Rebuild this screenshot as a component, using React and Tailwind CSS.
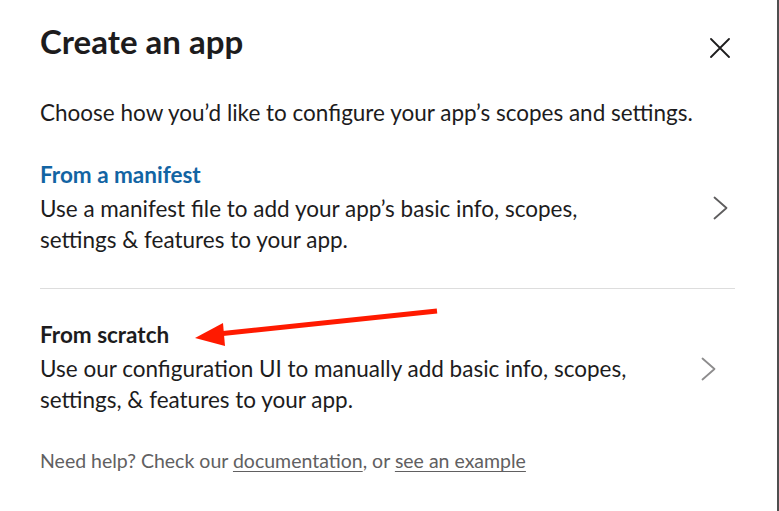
import React from "react";

const font = { fontFamily: "Lato, 'Noto Sans', sans-serif" };

function Chevron({ className }) {
  return (
    <svg width="15" height="24" viewBox="0 0 15 24" className={className} fill="none">
      <path d="M1.5 1.5 L13.5 12 L1.5 22.5" stroke="currentColor" strokeWidth="1.8" strokeLinecap="round" strokeLinejoin="round" />
    </svg>
  );
}

export default function App() {
  return (
    <div className="flex w-[779px] h-[511px] overflow-hidden bg-white" style={font}>
      <div className="relative flex-1 bg-white pl-[40px] pr-[42px] text-[#1d1c1d]">
        <div className="flex items-start justify-between pt-[21px]">
          <h1 className="text-[33px] leading-[40px] font-bold">Create an app</h1>
          <button className="mt-[17px] mr-[5px] text-[#1d1c1d]" aria-label="Close">
            <svg width="20" height="20" viewBox="0 0 20 20" fill="none">
              <path d="M1 1 L19 19 M19 1 L1 19" stroke="currentColor" strokeWidth="1.8" strokeLinecap="round" />
            </svg>
          </button>
        </div>
        <p className="mt-[36px] text-[22.5px] leading-[31px]">
          Choose how you’d like to configure your app’s scopes and settings.
        </p>

        <div className="mt-[31px] flex items-start justify-between">
          <div>
            <div className="text-[22.5px] leading-[31px] font-bold text-[#1264a3]">From a manifest</div>
            <div className="mt-[3px] text-[22.5px] leading-[31px] w-[610px]">
              Use a manifest file to add your app’s basic info, scopes, settings &amp; features to your app.
            </div>
          </div>
          <Chevron className="text-[#5e5d5e] mr-[7px] mt-[37px] shrink-0" />
        </div>

        <div className="mt-[33px] h-px bg-[#dddddd]" />

        <div className="mt-[30px] flex items-start justify-between">
          <div>
            <div className="text-[22.5px] leading-[31px] font-bold">From scratch</div>
            <div className="mt-[3px] text-[22.5px] leading-[31px] w-[610px]">
              Use our configuration UI to manually add basic info, scopes, settings, &amp; features to your app.
            </div>
          </div>
          <Chevron className="text-[#8d8c8d] mr-[19px] mt-[38px] shrink-0" />
        </div>

        <p className="mt-[34px] text-[19.5px] leading-[24px] text-[#616061]">
          Need help? Check our <span className="underline underline-offset-[3px]">documentation</span>, or{" "}
          <span className="underline underline-offset-[3px]">see an example</span>
        </p>

        <svg className="absolute left-0 top-0 pointer-events-none" width="777" height="511" viewBox="0 0 777 511">
          <path d="M437 311 L218 334" stroke="#ff1a00" strokeWidth="5" strokeLinecap="butt" />
          <path d="M195 338 L223 323 L225 346 Z" fill="#ff1a00" />
        </svg>
      </div>
      <div className="w-[2px] bg-[#4f4f4f]" />
    </div>
  );
}
